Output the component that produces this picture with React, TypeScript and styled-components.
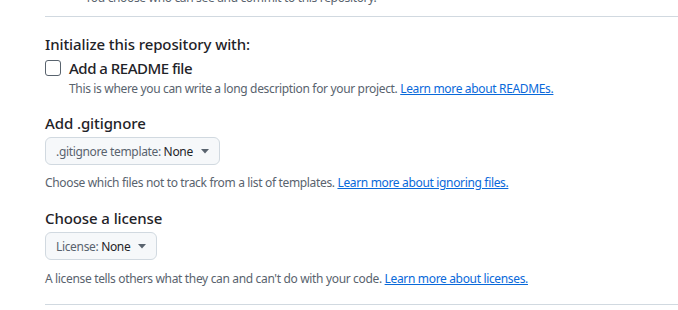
import React from "react";
import styled, { createGlobalStyle } from "styled-components";

const Global = createGlobalStyle`
  html, body { margin: 0; padding: 0; background: #ffffff; }
  body { font-family: "Noto Sans", "Open Sans", sans-serif; color: #1f2328; overflow: hidden; }
`;

const Page = styled.div`
  width: 678px;
  height: 310px;
  overflow: hidden;
  padding-left: 45px;
  box-sizing: border-box;
`;

const TopNote = styled.div`
  margin-top: -11px;
  padding-left: 40px;
  font-size: 12px;
  line-height: 18px;
  letter-spacing: -0.34px;
  color: #59636e;
`;

const Divider = styled.hr<{ $top: number }>`
  border: 0;
  border-top: 1px solid #d1d9e0;
  margin: ${(p) => p.$top}px 0 0 0;
  height: 0;
`;

const Heading = styled.div<{ $top: number }>`
  margin-top: ${(p) => p.$top}px;
  font-size: 15px;
  line-height: 20px;
  font-weight: 500;
  letter-spacing: -0.1px;
  color: #1f2328;
`;

const CheckRow = styled.label`
  display: flex;
  align-items: center;
  gap: 8px;
  margin-top: 4px;
`;

const Box = styled.span`
  width: 14px;
  height: 14px;
  border: 1px solid #59636e;
  border-radius: 3px;
  background: #fff;
  flex: none;
`;

const CheckLabel = styled.span`
  font-size: 15px;
  line-height: 20px;
  font-weight: 500;
  letter-spacing: -0.5px;
`;

const Note = styled.p<{ $top: number; $indent?: number }>`
  margin: ${(p) => p.$top}px 0 0 ${(p) => p.$indent ?? 0}px;
  font-size: 12px;
  line-height: 18px;
  letter-spacing: -0.34px;
  color: #59636e;
`;

const Link = styled.a`
  color: #0969da;
  text-decoration: underline;
`;

const Select = styled.button<{ $top: number }>`
  display: inline-flex;
  align-items: center;
  gap: 8px;
  margin-top: ${(p) => p.$top}px;
  height: 28px;
  padding: 0 10px;
  box-sizing: border-box;
  border: 1px solid #d1d9e0;
  border-radius: 6px;
  background: #f6f8fa;
  font-family: inherit;
  font-size: 12px;
  letter-spacing: -0.34px;
  color: #59636e;
`;

const Value = styled.span`
  color: #1f2328;
`;

const Caret = () => (
  <svg width="8" height="5" viewBox="0 0 8 5" aria-hidden="true">
    <path d="M0 0h8L4 4.5z" fill="#59636e" />
  </svg>
);

export default function App() {
  return (
    <Page>
      <Global />
      <TopNote>You choose who can see and commit to this repository.</TopNote>
      <Divider $top={9} />
      <Heading $top={17}>Initialize this repository with:</Heading>
      <CheckRow>
        <Box />
        <CheckLabel>Add a README file</CheckLabel>
      </CheckRow>
      <Note $top={2} $indent={24}>
        This is where you can write a long description for your project.{" "}
        <Link href="#">Learn more about READMEs.</Link>
      </Note>
      <Heading $top={15}>Add .gitignore</Heading>
      <div>
        <Select $top={4}>
          <span>
            .gitignore template: <Value>None</Value>
          </span>
          <Caret />
        </Select>
      </div>
      <Note $top={9}>
        Choose which files not to track from a list of templates.{" "}
        <Link href="#">Learn more about ignoring files.</Link>
      </Note>
      <Heading $top={16}>Choose a license</Heading>
      <div>
        <Select $top={4}>
          <span>
            License: <Value>None</Value>
          </span>
          <Caret />
        </Select>
      </div>
      <Note $top={10}>
        A license tells others what they can and can't do with your code.{" "}
        <Link href="#">Learn more about licenses.</Link>
      </Note>
      <Divider $top={16} />
    </Page>
  );
}
